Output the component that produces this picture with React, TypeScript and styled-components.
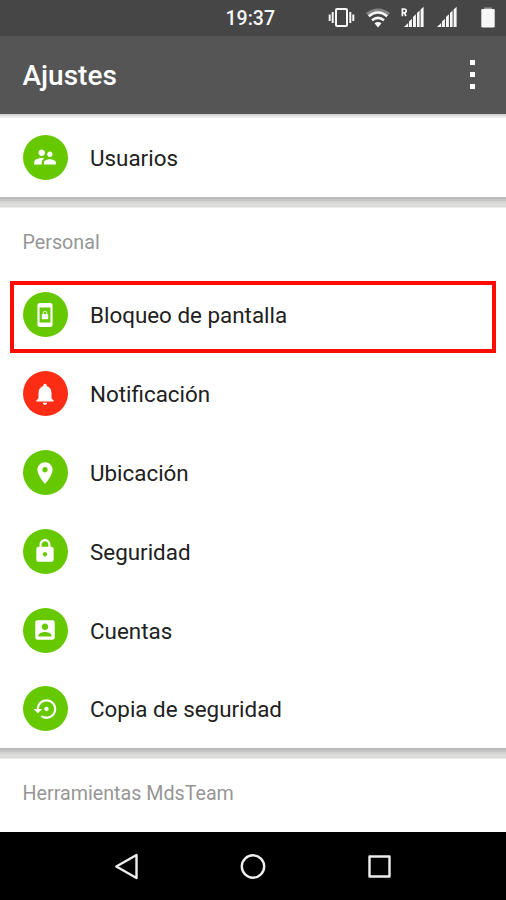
import React from "react";
import styled, { createGlobalStyle } from "styled-components";

const GlobalStyle = createGlobalStyle`
  * { box-sizing: border-box; }
  body { margin: 0; background: #fff; font-family: Roboto, "Liberation Sans", sans-serif; }
`;

const Screen = styled.div`
  width: 506px;
  height: 900px;
  display: flex;
  flex-direction: column;
  overflow: hidden;
  background: #fff;
`;

const StatusBar = styled.header`
  height: 36px;
  flex: none;
  display: grid;
  grid-template-columns: 320px 186px;
  background: #464646;
`;

const Clock = styled.time`
  padding-left: 225.5px;
  font-size: 19.5px;
  line-height: 38px;
  font-weight: 500;
  color: #f6f6f6;
`;

const Toolbar = styled.div`
  height: 78px;
  flex: none;
  display: flex;
  align-items: center;
  justify-content: space-between;
  padding: 0 31px 0 22.5px;
  background: #555;
`;

const Title = styled.h1`
  margin: 2px 0 0;
  font-size: 28px;
  line-height: 32px;
  font-weight: 500;
  color: #fff;
`;

const Overflow = styled.div`
  display: grid;
  gap: 7px;
  margin-bottom: 1px;
`;

const Dot = styled.i`
  width: 5px;
  height: 5px;
  background: #fff;
`;

const ToolbarShadow = styled.div`
  height: 4px;
  flex: none;
  background: linear-gradient(#c9c9c7, #e0e0de 45%, #f8f8f8);
`;

const Section = styled.section`
  flex: none;
  background: #fff;
`;

const Divider = styled.div`
  height: 11px;
  flex: none;
  background: linear-gradient(#bababa 0 2px, #c5c5c5 2px 4px, #d3d3d3 4px 6px, #dcdcda 6px 10px, #ededeb 10px);
`;

const SectionTitle = styled.h2<{ $height: number }>`
  margin: 0;
  height: ${(p) => p.$height}px;
  padding: 1px 22.5px 0;
  line-height: ${(p) => p.$height}px;
  font-size: 19.7px;
  font-weight: 400;
  color: #969696;
`;

const Row = styled.div`
  height: 78.8px;
  display: flex;
  align-items: center;
  gap: 22.5px;
  padding-left: 22.5px;
  position: relative;
`;

const Badge = styled.span<{ $color: string }>`
  width: 45px;
  height: 45px;
  border-radius: 50%;
  display: grid;
  place-items: center;
  background: ${(p) => p.$color};
  svg { width: 26px; height: 26px; fill: #fff; }
`;

const Label = styled.span`
  margin-top: 1px;
  font-size: 22.4px;
  line-height: 30px;
  color: #212121;
`;

const Highlight = styled.div`
  position: absolute;
  inset: 5px 10px 1.4px 10px;
  border: 4px solid #ff0d00;
`;

const NavBar = styled.nav`
  height: 68px;
  flex: none;
  margin-top: auto;
  background: #000;
`;

const icons = {
  users: "M16.5 12c1.38 0 2.49-1.12 2.49-2.5S17.88 7 16.5 7C15.12 7 14 8.12 14 9.5s1.12 2.5 2.5 2.5zM9 11c1.66 0 2.99-1.34 2.99-3S10.66 5 9 5C7.34 5 6 6.34 6 8s1.34 3 3 3zm7.5 3c-1.83 0-5.5.92-5.5 2.75V19h11v-2.25c0-1.83-3.67-2.75-5.5-2.75zM9 13c-2.33 0-7 1.17-7 3.5V19h7v-2.25c0-.85.33-2.34 2.37-3.47C10.5 13.1 9.66 13 9 13z",
  screen: "M10 16h4c.55 0 1-.45 1-1v-3c0-.55-.45-1-1-1v-1c0-1.11-.9-2-2-2s-2 .89-2 2v1c-.55 0-1 .45-1 1v3c0 .55.45 1 1 1zm.8-6c0-.66.54-1.2 1.2-1.2s1.2.54 1.2 1.2v1h-2.4v-1zM17 1H7c-1.1 0-2 .9-2 2v18c0 1.1.9 2 2 2h10c1.1 0 2-.9 2-2V3c0-1.1-.9-2-2-2zm0 18H7V5h10v14z",
  bell: "M12 22c1.1 0 2-.9 2-2h-4c0 1.1.89 2 2 2zm6-6v-5c0-3.07-1.64-5.64-4.5-6.32V4c0-.83-.67-1.5-1.5-1.5s-1.5.67-1.5 1.5v.68C7.63 5.36 6 7.92 6 11v5l-2 2v1h16v-1l-2-2z",
  pin: "M12 2C8.13 2 5 5.13 5 9c0 5.25 7 13 7 13s7-7.75 7-13c0-3.87-3.13-7-7-7zm0 9.5c-1.38 0-2.5-1.12-2.5-2.5s1.12-2.5 2.5-2.5 2.5 1.12 2.5 2.5-1.12 2.5-2.5 2.5z",
  lock: "M18 8h-1V6c0-2.76-2.24-5-5-5S7 3.24 7 6v2H6c-1.1 0-2 .9-2 2v10c0 1.1.9 2 2 2h12c1.1 0 2-.9 2-2V10c0-1.1-.9-2-2-2zm-6 9c-1.1 0-2-.9-2-2s.9-2 2-2 2 .9 2 2-.9 2-2 2zm3.1-9H8.9V6c0-1.71 1.39-3.1 3.1-3.1 1.71 0 3.1 1.39 3.1 3.1v2z",
  account: "M3 5v14c0 1.1.89 2 2 2h14c1.1 0 2-.9 2-2V5c0-1.1-.9-2-2-2H5c-1.11 0-2 .9-2 2zm12 4c0 1.66-1.34 3-3 3s-3-1.34-3-3 1.34-3 3-3 3 1.34 3 3zm-9 8c0-2 4-3.1 6-3.1s6 1.1 6 3.1v1H6v-1z",
  backup: "M15.4 12c0-1.1-.9-2-2-2s-2 .9-2 2 .9 2 2 2 2-.9 2-2zm-2-9c-4.97 0-9 4.03-9 9H1.4l4 4 4-4H6.4c0-3.87 3.13-7 7-7s7 3.13 7 7-3.13 7-7 7c-1.51 0-2.91-.49-4.06-1.3l-1.42 1.44C9.44 20.3 11.34 21 13.4 21c4.97 0 9-4.03 9-9s-4.03-9-9-9z",
};

type IconName = keyof typeof icons;

interface Item {
  icon: IconName;
  label: string;
  color?: string;
  highlighted?: boolean;
}

const personal: Item[] = [
  { icon: "screen", label: "Bloqueo de pantalla", highlighted: true },
  { icon: "bell", label: "Notificación", color: "#fd2d15" },
  { icon: "pin", label: "Ubicación" },
  { icon: "lock", label: "Seguridad" },
  { icon: "account", label: "Cuentas" },
  { icon: "backup", label: "Copia de seguridad" },
];

function SettingRow({ icon, label, color = "#66c900", highlighted }: Item) {
  return (
    <Row>
      <Badge $color={color}>
        <svg viewBox="0 0 24 24">
          <path d={icons[icon]} />
        </svg>
      </Badge>
      <Label>{label}</Label>
      {highlighted && <Highlight />}
    </Row>
  );
}

function StatusIcons() {
  return (
    <svg width="186" height="36" viewBox="0 0 186 36" fill="#f8f8f8">
      <g fill="none" stroke="#f8f8f8" strokeWidth="2">
        <rect x="16" y="9" width="11" height="17" rx="1" />
        <path d="M12.7 12v11M30.3 12v11M9.7 14.5v6.5M33.3 14.5v6.5" />
      </g>
      <path d="M46 13Q58 4 70 13L67.8 15.5Q58 8.5 48.2 15.5Z" fill="#858585" />
      <g fill="none" stroke="#f8f8f8" strokeWidth="2.6">
        <path d="M48.8 16.2Q58 8.8 67.2 16.2" />
        <path d="M52 20.2Q58 15.6 64 20.2" />
      </g>
      <path d="M54.5 23.3Q58 20.8 61.5 23.3L58 27.5Z" />
      <path d="M82.4 16.2V9h1.8c2.6 0 2.6 3.8 0 3.8h-1.8M84.2 12.8l1.9 3.4" fill="none" stroke="#f8f8f8" strokeWidth="1.7" />
      {[84, 117].map((x) => (
        <path
          key={x}
          d={`M${x} 27l4.2-4v4zM${x + 5} 27v-5.5l2.9-2.8V27zM${x + 9} 27V17l2.9-2.8V27zM${x + 13} 27V13l2.6-2.6V27zM${x + 16.6} 27V9.5l3-2.7V27z`}
        />
      ))}
      <path d="M164 7.5h8v2h-8z" fill="#999" />
      <rect x="161.3" y="9" width="13.4" height="18.5" rx="1" />
    </svg>
  );
}

export default function App() {
  return (
    <Screen>
      <GlobalStyle />
      <StatusBar>
        <Clock>19:37</Clock>
        <StatusIcons />
      </StatusBar>
      <Toolbar>
        <Title>Ajustes</Title>
        <Overflow>
          <Dot />
          <Dot />
          <Dot />
        </Overflow>
      </Toolbar>
      <ToolbarShadow />
      <Section>
        <SettingRow icon="users" label="Usuarios" />
      </Section>
      <Divider />
      <Section>
        <SectionTitle $height={67.8}>Personal</SectionTitle>
        {personal.map((item) => (
          <SettingRow key={item.label} {...item} />
        ))}
      </Section>
      <Divider />
      <Section>
        <SectionTitle $height={68}>Herramientas MdsTeam</SectionTitle>
      </Section>
      <NavBar>
        <svg width="506" height="68" viewBox="0 0 506 68" fill="none" stroke="#eee" strokeWidth="2.4" strokeLinejoin="round">
          <path d="M116.3 34.5L136.5 23V46Z" />
          <circle cx="253" cy="34.5" r="11.2" />
          <rect x="369.5" y="24.5" width="20" height="20" />
        </svg>
      </NavBar>
    </Screen>
  );
}
